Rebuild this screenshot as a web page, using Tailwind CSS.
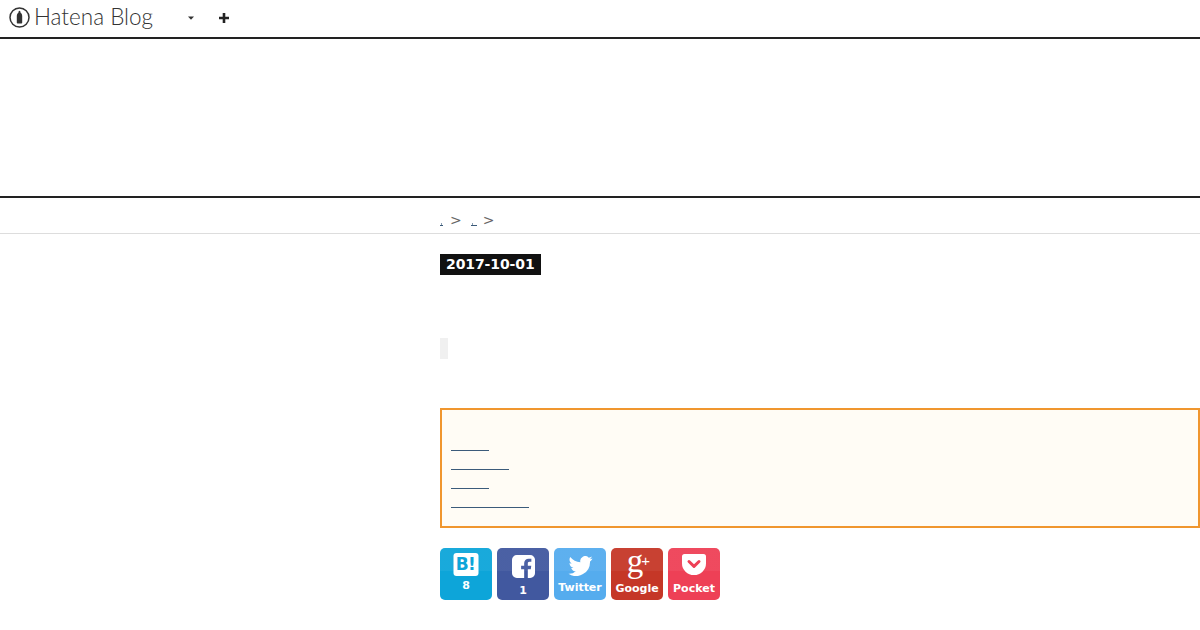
<!DOCTYPE html>
<html lang="en">
<head>
<meta charset="utf-8">
<title>Hatena Blog</title>
<script src="https://cdn.jsdelivr.net/npm/@tailwindcss/browser@4"></script>
</head>
<body class="bg-white font-['DejaVu_Sans',sans-serif] overflow-hidden">
<div class="w-[1200px] h-[630px] overflow-hidden">
  <header class="h-[39px] border-b-2 border-[#222] flex items-center pl-[9px] pb-[2px]">
    <svg width="21" height="21" viewBox="0 0 21 21" fill="none" class="shrink-0">
      <circle cx="10.500" cy="10.500" r="9.500" stroke="#333" stroke-width="1.500"/>
      <path d="M10.500 3.800c.7 0 1 .9 1.100 2 .9.700 1.600 1.800 1.600 3.300v6.400c0 .6-.4 1-1 1H8.800c-.6 0-1-.4-1-1V9.100c0-1.500.7-2.600 1.600-3.300.1-1.100.4-2 1.100-2z" fill="#333"/>
    </svg>
    <span class="ml-[4px] w-[133px] text-[22.5px] leading-none font-light text-[#333] font-['Lato',sans-serif]">Hatena Blog</span>
    <svg width="6" height="4" viewBox="0 0 6 4" class="ml-[21px] mt-[1px]"><path d="M0 0.500h6L3 3.800z" fill="#333"/></svg>
    <svg width="10" height="10" viewBox="0 0 10 10" class="ml-[25px]"><path d="M5 0v10M0 5h10" stroke="#222" stroke-width="2.600"/></svg>
  </header>
  <div class="h-[157px]"></div>
  <div class="border-t-2 border-[#222] border-b border-b-[#ddd] h-[38px] pl-[440px] flex items-center text-[#666] text-[14px] pt-[7px]">
    <span class="w-[3px] h-[3px] mt-[10px] border-b border-[#3b5b7a] pl-[1px]"><span class="block w-[1px] h-[2px] bg-[#3b5b7a]/60"></span></span>
    <span class="ml-[7px] mt-[2px]">&gt;</span>
    <span class="ml-[9px] w-[6px] h-[3px] mt-[10px] border-b border-[#3b5b7a] pl-[1px]"><span class="block w-[1px] h-[2px] bg-[#3b5b7a]/60"></span></span>
    <span class="ml-[6px] mt-[2px]">&gt;</span>
  </div>
  <main class="pl-[440px] flex flex-col items-start">
    <div class="mt-[20px] h-[21px] w-[101px] bg-[#111] text-white text-[14px] font-bold leading-[21px] pl-[6px] tracking-[-0.1px]">2017-10-01</div>
    <div class="mt-[63px] w-[8px] h-[21px] bg-[#f0f0f0]"></div>
    <div class="mt-[49px] w-[760px] h-[120px] border-2 border-[#f0962e] bg-[#fffcf5] flex flex-col pl-[9px] pt-[40px]">
      <span class="w-[38px] h-[1px] bg-[#3b5b7a]"></span>
      <span class="mt-[18px] w-[58px] h-[1px] bg-[#3b5b7a]"></span>
      <span class="mt-[18px] w-[38px] h-[1px] bg-[#3b5b7a]"></span>
      <span class="mt-[18px] w-[78px] h-[1px] bg-[#3b5b7a]"></span>
    </div>
    <div class="mt-[20px] flex gap-[5px] text-white font-bold">
      <div class="w-[52px] h-[52px] rounded-[5px] bg-[#0da5d9] bg-[linear-gradient(rgba(255,255,255,0.05)_0,rgba(255,255,255,0.05)_45%,transparent_45%)] flex flex-col items-center pt-[5px]">
        <div class="w-[25px] h-[23px] -translate-x-[0.5px] rounded-[3px] bg-white text-[#0da5d9] text-[17px] leading-[23px] text-center font-bold tracking-[-0.5px]">B!</div>
        <span class="text-[11px] leading-[13px] mt-[3px]">8</span>
      </div>
      <div class="w-[52px] h-[52px] rounded-[5px] bg-[#41589f] bg-[linear-gradient(rgba(255,255,255,0.05)_0,rgba(255,255,255,0.05)_45%,transparent_45%)] flex flex-col items-center pt-[7px]">
        <svg width="23" height="23" viewBox="0 0 24 24"><path d="M5 0h14a5 5 0 0 1 5 5v14a5 5 0 0 1-5 5h-2.500v-9.200h3.100l.5-3.600h-3.600V8.900c0-1 .3-1.800 1.800-1.800h1.900V3.900c-.3 0-1.500-.1-2.800-.1-2.800 0-4.700 1.700-4.700 4.800v2.600H9.500v3.600h3.200V24H5a5 5 0 0 1-5-5V5a5 5 0 0 1 5-5z" fill="#fff"/></svg>
        <span class="text-[11px] leading-[13px] mt-[6px]">1</span>
      </div>
      <div class="w-[52px] h-[52px] rounded-[5px] bg-[#55acee] bg-[linear-gradient(rgba(255,255,255,0.05)_0,rgba(255,255,255,0.05)_45%,transparent_45%)] flex flex-col items-center pt-[8px]">
        <svg width="25" height="20" viewBox="0 0 24 20"><path d="M24 2.400c-.9.4-1.800.7-2.800.8 1-.6 1.800-1.600 2.200-2.700-1 .6-2 1-3.100 1.200A4.900 4.900 0 0 0 11.900 6.200C7.800 6 4.200 4 1.700.9.400 3.200 1 6 3.200 7.500c-.8 0-1.600-.2-2.200-.6 0 2.400 1.700 4.400 3.900 4.900-.7.200-1.500.2-2.200.1.600 2 2.400 3.400 4.600 3.400A9.900 9.900 0 0 1 0 17.800 14 14 0 0 0 21.500 5.400c1-.7 1.800-1.600 2.500-3z" fill="#fff"/></svg>
        <span class="text-[11px] leading-[13px] mt-[5px] tracking-[-0.05px]">Twitter</span>
      </div>
      <div class="w-[52px] h-[52px] rounded-[5px] bg-[#c53727] bg-[linear-gradient(rgba(255,255,255,0.05)_0,rgba(255,255,255,0.05)_45%,transparent_45%)] flex flex-col items-center">
        <div class="h-[34px] flex items-start pl-[3px] font-['Liberation_Serif',serif] font-normal text-[33px] leading-[27px]">g<span class="text-[15px] leading-[25px] font-['Liberation_Sans',sans-serif] -ml-[2px]">+</span></div>
        <span class="text-[11px] leading-[13px]">Google</span>
      </div>
      <div class="w-[52px] h-[52px] rounded-[5px] bg-[#ee4056] bg-[linear-gradient(rgba(255,255,255,0.05)_0,rgba(255,255,255,0.05)_45%,transparent_45%)] flex flex-col items-center pt-[6px]">
        <svg width="24" height="21" viewBox="0 0 24 21"><path d="M2.500 0h19A2.500 2.500 0 0 1 24 2.500v7a12 11.500 0 0 1-24 0v-7A2.500 2.500 0 0 1 2.500 0z" fill="#fff"/><path d="M7 7.500l5 4.800 5-4.800" fill="none" stroke="#ee4056" stroke-width="3" stroke-linecap="round" stroke-linejoin="round"/></svg>
        <span class="text-[11px] leading-[13px] mt-[7px]">Pocket</span>
      </div>
    </div>
  </main>
</div>
</body>
</html>
